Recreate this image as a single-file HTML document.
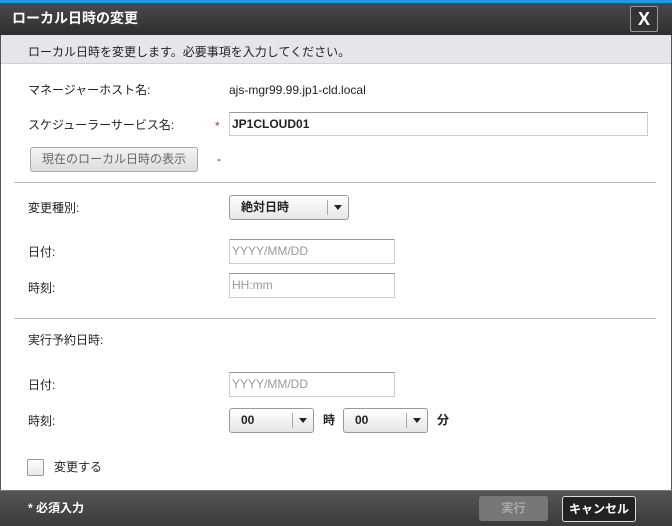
<!DOCTYPE html>
<html><head><meta charset="utf-8"><style>
*{margin:0;padding:0;box-sizing:border-box}
body{width:672px;height:526px;position:relative;overflow:hidden;background:#fff;font-family:"Liberation Sans","Noto Sans CJK JP",sans-serif;font-size:12px;color:#222}
.a{position:absolute}
.t{position:absolute;line-height:16px;white-space:nowrap}
.inp{position:absolute;border:1px solid #ccc;border-top-color:#999;background:#fff;color:#999;font-size:12px;padding-left:2px;line-height:22px}
.sel{position:absolute;border:1px solid #999;border-radius:3px;background:linear-gradient(#fff,#e6e6e6);font-weight:bold;font-size:12px;line-height:22px}
.sel .d{position:absolute;top:4px;bottom:4px;width:1px;background:#aaa}
.sel .ar{position:absolute;top:9px;width:0;height:0;border-left:4px solid transparent;border-right:4px solid transparent;border-top:5px solid #222}
</style></head><body>
<div class="a" style="left:0;top:0;width:672px;height:526px;border:1px solid #555"></div>
<div class="a" style="left:0;top:0;width:672px;height:3px;background:#1b9ee0"></div>
<div class="a" style="left:0;top:3px;width:672px;height:32px;background:linear-gradient(#4a4a4a,#2e2e2e)"></div>
<div class="t" style="left:12px;top:10px;color:#fff;font-weight:bold;font-size:14px">ローカル日時の変更</div>
<div class="a" style="left:630px;top:6px;width:28px;height:26px;border:1px solid #999;border-radius:2px;background:#333;color:#fff;font-size:18px;font-weight:bold;text-align:center;line-height:24px">X</div>
<div class="a" style="left:1px;top:35px;width:670px;height:29px;background:#e4e6ea;border-bottom:1px solid #d0d2d6"></div>
<div class="t" style="left:28px;top:44px">ローカル日時を変更します。必要事項を入力してください。</div>
<div class="t" style="left:28px;top:82px">マネージャーホスト名:</div>
<div class="t" style="left:229px;top:82px">ajs-mgr99.99.jp1-cld.local</div>
<div class="t" style="left:28px;top:117px">スケジューラーサービス名:</div>
<div class="t" style="left:215px;top:118px;color:#a33">*</div>
<div class="inp" style="left:229px;top:112px;width:419px;height:24px;color:#222;font-weight:bold">JP1CLOUD01</div>
<div class="a" style="left:30px;top:147px;width:168px;height:25px;border:1px solid #aaa;border-radius:3px;background:linear-gradient(#f4f4f4,#dcdcdc);color:#666;text-align:center;line-height:23px">現在のローカル日時の表示</div>
<div class="t" style="left:217px;top:151px">-</div>
<div class="a" style="left:14px;top:182px;width:642px;height:1px;background:#bbb"></div>
<div class="t" style="left:28px;top:200px">変更種別:</div>
<div class="sel" style="left:229px;top:195px;width:120px;height:25px"><span style="position:absolute;left:11px">絶対日時</span><div class="d" style="left:97px"></div><div class="ar" style="left:104px"></div></div>
<div class="t" style="left:28px;top:244px">日付:</div>
<div class="inp" style="left:229px;top:239px;width:166px;height:25px">YYYY/MM/DD</div>
<div class="t" style="left:28px;top:280px">時刻:</div>
<div class="inp" style="left:229px;top:273px;width:166px;height:25px">HH:mm</div>
<div class="a" style="left:14px;top:318px;width:642px;height:1px;background:#bbb"></div>
<div class="t" style="left:28px;top:332px">実行予約日時:</div>
<div class="t" style="left:28px;top:377px">日付:</div>
<div class="inp" style="left:229px;top:372px;width:166px;height:25px">YYYY/MM/DD</div>
<div class="t" style="left:28px;top:413px">時刻:</div>
<div class="sel" style="left:229px;top:408px;width:85px;height:25px"><span style="position:absolute;left:11px">00</span><div class="d" style="left:62px"></div><div class="ar" style="left:69px"></div></div>
<div class="t" style="left:323px;top:412px;font-weight:bold">時</div>
<div class="sel" style="left:343px;top:408px;width:85px;height:25px"><span style="position:absolute;left:11px">00</span><div class="d" style="left:62px"></div><div class="ar" style="left:69px"></div></div>
<div class="t" style="left:437px;top:412px;font-weight:bold">分</div>
<div class="a" style="left:27px;top:459px;width:17px;height:17px;border:1px solid #999;border-radius:2px;background:linear-gradient(#fff,#e8e8e8)"></div>
<div class="t" style="left:54px;top:459px">変更する</div>
<div class="a" style="left:0;top:490px;width:672px;height:36px;background:linear-gradient(#555,#3a3a3a);border-top:1px solid #777"></div>
<div class="t" style="left:28px;top:500px;color:#fff;font-weight:bold">* 必須入力</div>
<div class="a" style="left:479px;top:496px;width:69px;height:25px;border-radius:3px;background:#777;color:#aaa;text-align:center;line-height:25px;font-weight:bold">実行</div>
<div class="a" style="left:562px;top:496px;width:74px;height:26px;border:1px solid #ddd;border-radius:3px;background:#222;color:#fff;text-align:center;line-height:24px;font-weight:bold">キャンセル</div>
</body></html>
